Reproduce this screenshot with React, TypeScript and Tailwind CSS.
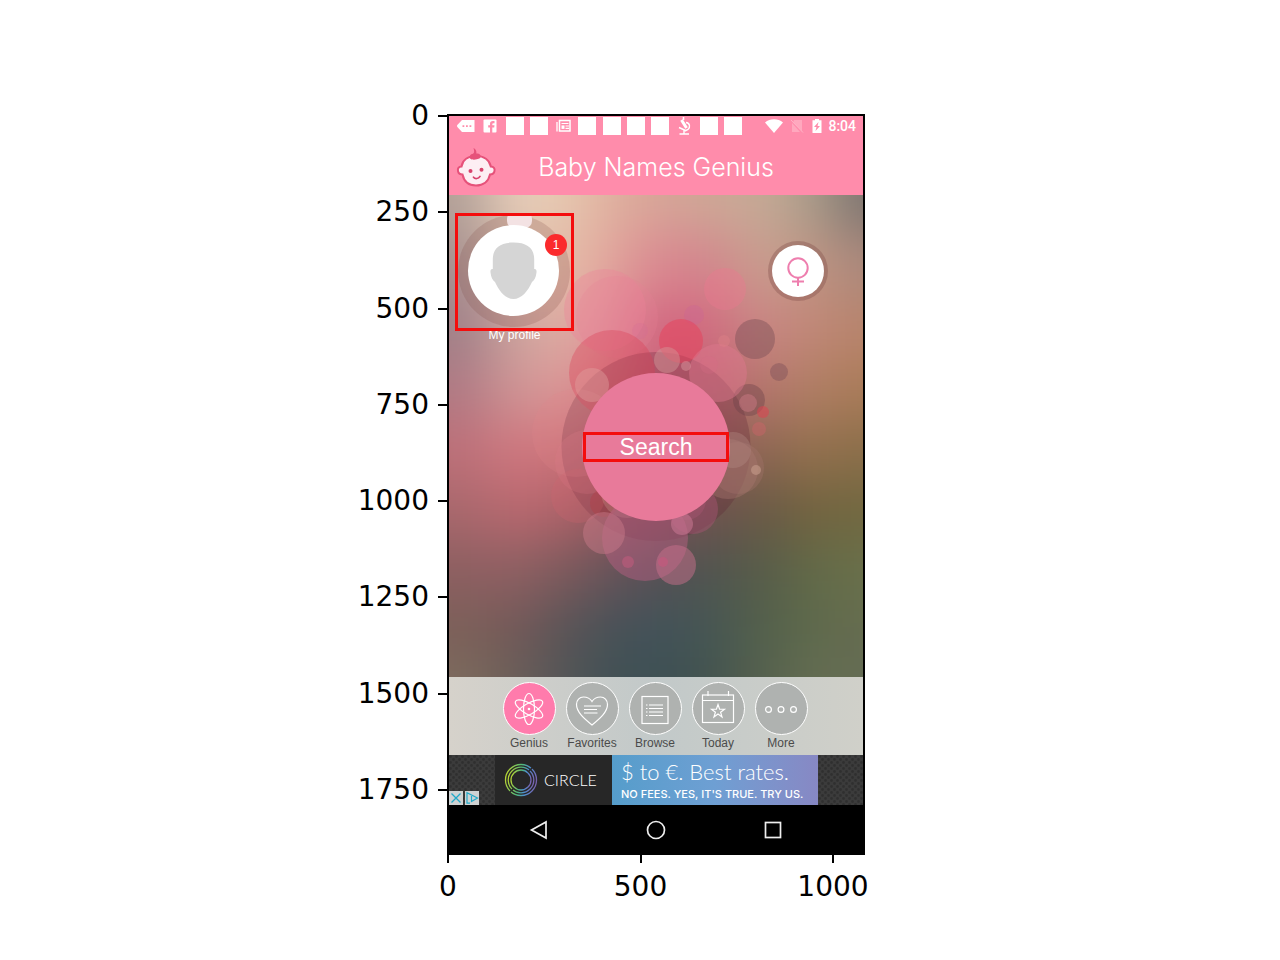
import type { ReactNode } from "react";

const yTicks = [0, 250, 500, 750, 1000, 1250, 1500, 1750];
const xTicks = [0, 500, 1000];

/* Backdrop colour mesh: column centres, then one row of colours per height. */
const meshX = [460, 515, 565, 610, 655, 705, 760, 815, 860];
const meshRows: [number, string[]][] = [
  [200, ["#b3a198", "#e6cdb9", "#e6c8b0", "#e0b09f", "#d8a498", "#cfa696", "#c6aa96", "#aa9c8a", "#7d7470"]],
  [265, ["#a68f8f", "#d8b8aa", "#e6bda8", "#e0a49c", "#db8890", "#d3858d", "#c99c8e", "#c09483", "#ab897c"]],
  [330, ["#a08088", "#cba39e", "#e0aea4", "#dd9298", "#d26580", "#d26a80", "#c98583", "#c18878", "#b8846c"]],
  [390, ["#b07a84", "#cf9495", "#dc9696", "#d27f85", "#c86075", "#bd6370", "#b4756d", "#b07e64", "#a97b58"]],
  [450, ["#bd7079", "#cf7880", "#cf747b", "#c0646f", "#ab5a65", "#955a5c", "#8e6754", "#94714e", "#8b6e4a"]],
  [510, ["#a9686d", "#b9686f", "#b0636a", "#9a5a60", "#82525a", "#70524f", "#6a5a47", "#73633f", "#726840"]],
  [570, ["#8d5f61", "#8f6063", "#7e5a5c", "#68535a", "#565155", "#505450", "#575c49", "#626a48", "#69704a"]],
  [630, ["#7c6059", "#735958", "#5a5457", "#485257", "#42525a", "#455654", "#53604c", "#5e6a4c", "#666c50"]],
  [685, ["#7d6c5e", "#6b5f59", "#525557", "#415154", "#3d4f54", "#42524f", "#55604e", "#656e52", "#646b54"]],
];

type Bubble = [number, number, number, string, number];
const bubbles: Bubble[] = [
  [605, 310, 41, "#ee8098", 0.34],
  [617, 317, 41, "#e88098", 0.22],
  [640, 331, 8, "#d26a9c", 0.2],
  [612, 373, 43, "#dc4055", 0.36],
  [725, 289, 21, "#ee7890", 0.36],
  [694, 315, 10, "#c860a0", 0.24],
  [681, 341, 22, "#e8405a", 0.5],
  [755, 339, 20, "#7d5058", 0.46],
  [779, 372, 9, "#7d5058", 0.44],
  [749, 400, 16, "#6b4048", 0.4],
  [576, 433, 44, "#e0888a", 0.2],
  [587, 462, 32, "#dc7c8c", 0.24],
  [578, 496, 27, "#cf6670", 0.26],
  [604, 503, 14, "#c03038", 0.24],
  [718, 373, 29, "#e07890", 0.44],
  [709, 365, 9, "#d86c88", 0.26],
  [748, 403, 9, "#d07c88", 0.46],
  [763, 412, 6, "#dc4450", 0.55],
  [724, 341, 6, "#de8088", 0.45],
  [759, 429, 7, "#cc6468", 0.45],
  [592, 385, 17, "#dfa09c", 0.44],
  [667, 360, 13, "#d29a98", 0.45],
  [686, 366, 5, "#d8929a", 0.5],
  [627, 492, 26, "#c08880", 0.4],
  [645, 538, 43, "#b86084", 0.48],
  [604, 533, 21, "#cc7c8c", 0.45],
  [676, 565, 20, "#c8708c", 0.5],
  [628, 562, 6, "#cf5a80", 0.45],
  [663, 562, 5, "#d85080", 0.4],
  [693, 509, 25, "#a85474", 0.45],
  [686, 500, 20, "#b4587a", 0.3],
  [682, 524, 11, "#cf7c98", 0.5],
  [728, 469, 30, "#ac7870", 0.38],
  [738, 468, 26, "#a87870", 0.3],
  [733, 450, 18, "#b48c84", 0.38],
  [756, 470, 5, "#bf9484", 0.7],
];

function Backdrop() {
  return (
    <svg
      className="absolute inset-0 h-full w-full"
      viewBox="449 195 414 482"
      preserveAspectRatio="none"
      aria-hidden="true"
    >
      <defs>
        <filter
          id="soften"
          filterUnits="userSpaceOnUse"
          x="300"
          y="50"
          width="720"
          height="780"
          colorInterpolationFilters="sRGB"
        >
          <feGaussianBlur stdDeviation="25" />
        </filter>
      </defs>
      <g filter="url(#soften)">
        {meshRows.map(([y, colours], r) => {
          const top = r === 0 ? 60 : (meshRows[r - 1][0] + y) / 2;
          const bottom = r === meshRows.length - 1 ? 820 : (meshRows[r + 1][0] + y) / 2;
          return colours.map((c, i) => {
            const left = i === 0 ? 310 : (meshX[i - 1] + meshX[i]) / 2;
            const right = i === meshX.length - 1 ? 1010 : (meshX[i + 1] + meshX[i]) / 2;
            return (
              <rect key={`${r}-${i}`} x={left} y={top} width={right - left + 1} height={bottom - top + 1} fill={c} />
            );
          });
        })}
      </g>
      <circle cx="656" cy="446.5" r="94.5" fill="#5a1e32" opacity="0.26" />
      {bubbles.map(([cx, cy, r, fill, opacity], i) => (
        <circle key={i} cx={cx} cy={cy} r={r} fill={fill} opacity={opacity} />
      ))}
    </svg>
  );
}

function Cell({ children }: { children?: ReactNode }) {
  return (
    <span className="flex flex-1 justify-center">
      {children ?? <span className="h-[18px] w-[18px] bg-white" />}
    </span>
  );
}

function StatusBar() {
  return (
    <div className="flex h-[20px] items-center justify-between pr-[7px] pl-[5px]">
      <div className="flex w-[291px] items-center">
        <Cell>
          <svg width="18" height="14" viewBox="0 0 18 14">
            <path d="M5 1h12.500v12H5L.8 8.500a2 2 0 0 1 0-3z" fill="#fff" />
            <path d="M5.500 6.200h1.800v1.800H5.500zM9 6.200h1.800v1.800H9zM12.500 6.200h1.800v1.800h-1.800z" fill="#ff8cab" />
          </svg>
        </Cell>
        <Cell>
          <svg width="14" height="14" viewBox="0 0 14 14">
            <rect x="0.500" y="0.500" width="13" height="13" rx="1" fill="#fff" />
            <path d="M7 14V8.500H5.200V6.300H7V4.800C7 3 8 2 9.800 2h1.700v2.200h-1.200c-.7 0-1 .3-1 .9v1.200h2.200l-.3 2.200H9.300V14z" fill="#ff8cab" />
          </svg>
        </Cell>
        <Cell />
        <Cell />
        <Cell>
          <svg width="15" height="14" viewBox="0 0 15 14" fill="none" stroke="#fff">
            <path d="M1 3v9.500" strokeWidth="1.300" />
            <rect x="3.500" y="1.500" width="10.500" height="10.500" strokeWidth="1.500" />
            <path d="M5.500 4.500h7M9.500 7H13M9.500 9.300H13" strokeWidth="1.200" />
            <path d="M5.500 6.400h3v3.500h-3z" fill="#fff" stroke="none" />
          </svg>
        </Cell>
        <Cell />
        <Cell />
        <Cell />
        <Cell />
        <Cell>
          <svg width="13" height="18" viewBox="0 0 13 18" fill="none" stroke="#fff" strokeWidth="1.400">
            <path d="M5.500 0v3" strokeWidth="1.600" />
            <path d="M3.500 3l5 8" strokeWidth="3" />
            <path d="M1 10.500l6.500 3M8 5.500c4 .5 4.500 5 2 7L7 14M1.500 17h9.500M6 13.500V17" />
          </svg>
        </Cell>
        <Cell />
        <Cell />
      </div>
      <div className="flex items-center">
        <svg className="mr-[7px]" width="18" height="14" viewBox="0 0 18 14">
          <path d="M0 3.400C5-.8 13-.8 18 3.400L9 14z" fill="#fff" />
        </svg>
        <svg className="mr-[8px]" width="14" height="14" viewBox="0 0 14 14">
          <path d="M4 1h8v11L3 3.500zM2 4l8 9H2z" fill="#ffb3c6" opacity="0.700" />
          <path d="M1 1l12 12.500" stroke="#ffb3c6" strokeWidth="1" />
        </svg>
        <svg className="mr-[6px]" width="10" height="14" viewBox="0 0 10 14">
          <path d="M3 0h4v1.300h2.500V14h-9V1.300H3z" fill="#fff" />
          <path d="M6.500 3L2 8h2.500L3.500 12 8 7H5.500z" fill="#ff8cab" />
        </svg>
        <span className="font-[Roboto,sans-serif] text-[14px] leading-4 font-medium">8:04</span>
      </div>
    </div>
  );
}

function BabyIcon() {
  return (
    <svg width="40" height="42" viewBox="0 0 40 42" fill="none">
      <path
        d="M20 9C12 9 6.500 13 5.500 19.500 2.500 19.500 1.500 21.500 2 24c.4 2.300 2 3.500 4.500 3.500C8 34.500 13 38.500 20 38.500s12.500-4 14-11c2.300 0 4-1.200 4.500-3.500.5-2.500-.7-4.500-3.700-4.500C33.500 13 28 9 20 9z"
        fill="#fdeef3"
        stroke="#e6527a"
        strokeWidth="2"
      />
      <path d="M14 11.500c-1-2.500.5-4.300 3-4.800 1.300-.4 1.500-2.500.5-5.700 2.500 1.200 3.300 3.400 2.800 5.600 2.500-.5 4 .6 4.300 2.200.4 2-1.100 3.200-3.800 3.500-2.500.6-5.300.5-6.800-.8z" fill="#e6527a" />
      <circle cx="14.500" cy="24" r="2" fill="#d8426c" />
      <circle cx="25.500" cy="22.800" r="2" fill="#d8426c" />
      <path d="M17.500 30.200c1.500 2 5 1.800 6.500-.8" stroke="#d8426c" strokeWidth="1.700" strokeLinecap="round" />
    </svg>
  );
}

const line = { fill: "none", stroke: "#fff", strokeWidth: 1.2 } as const;

const tabs: { label: string; active?: boolean; icon: ReactNode }[] = [
  {
    label: "Genius",
    active: true,
    icon: (
      <g {...line}>
        <ellipse cx="18" cy="18" rx="5.500" ry="15.500" />
        <ellipse cx="18" cy="18" rx="5.500" ry="15.500" transform="rotate(60 18 18)" />
        <ellipse cx="18" cy="18" rx="5.500" ry="15.500" transform="rotate(120 18 18)" />
        <circle cx="18" cy="18" r="1.300" fill="#fff" stroke="none" />
      </g>
    ),
  },
  {
    label: "Favorites",
    icon: (
      <g {...line}>
        <path d="M18 34C10 27.500 2.500 21 2.500 13.500 2.500 9 5.500 6 9.500 6c3.700 0 6.800 1.800 8.500 4.500C19.700 7.800 22.800 6 26.500 6c4 0 7 3 7 7.500C33.500 21 26 27.500 18 34z" />
        <path d="M10 15h17M10 18.500h13M10 22h13.500" />
      </g>
    ),
  },
  {
    label: "Browse",
    icon: (
      <g {...line}>
        <rect x="5" y="5.500" width="26" height="27" />
        <path d="M12 14h14M12 17.500h14M12 21h14M12 24.500h14M9 14h1.500M9 17.500h1.500M9 21h1.500M9 24.500h1.500" />
      </g>
    ),
  },
  {
    label: "Today",
    icon: (
      <g {...line}>
        <rect x="2.500" y="4" width="31" height="27.500" />
        <path d="M2.500 9.500h31M8 0v5M28.500 0v5" />
        <path d="M18 13.500l1.600 4.600 4.900.1-3.900 3 1.400 4.700-4-2.800-4 2.800 1.400-4.700-3.900-3 4.900-.1z" />
      </g>
    ),
  },
  {
    label: "More",
    icon: (
      <g {...line}>
        <circle cx="5.500" cy="18.500" r="2.900" />
        <circle cx="18" cy="18.500" r="2.900" />
        <circle cx="30.500" cy="18.500" r="2.900" />
      </g>
    ),
  },
];

function HexPattern({ id }: { id: string }) {
  return (
    <svg className="h-full w-full" aria-hidden="true">
      <defs>
        <pattern id={id} width="6" height="6" patternUnits="userSpaceOnUse">
          <rect width="6" height="6" fill="#3b3b3b" />
          <circle cx="1.500" cy="1.500" r="1.400" fill="#2f2f2f" />
          <circle cx="4.500" cy="4.500" r="1.400" fill="#2f2f2f" />
        </pattern>
      </defs>
      <rect width="100%" height="100%" fill={`url(#${id})`} />
    </svg>
  );
}

function AdBanner() {
  return (
    <aside className="relative flex h-[50px] bg-[#272727] text-white">
      <div className="w-[46px]">
        <HexPattern id="hexLeft" />
      </div>
      <div className="flex flex-1 items-center gap-[6px] pl-[9px]">
        <svg width="34" height="34" viewBox="0 0 34 34" fill="none" strokeWidth="1.300">
          <defs>
            <linearGradient id="ring" x1="0" y1="0.400" x2="1" y2="0.600">
              <stop offset="0" stopColor="#b5d334" />
              <stop offset="0.450" stopColor="#4fb77c" />
              <stop offset="0.700" stopColor="#4d8fd0" />
              <stop offset="1" stopColor="#7a62b0" />
            </linearGradient>
          </defs>
          <circle cx="17" cy="17" r="15.500" stroke="url(#ring)" />
          <circle cx="17" cy="17" r="12.800" stroke="url(#ring)" />
          <circle cx="17" cy="17" r="10" stroke="url(#ring)" />
          <path d="M24 9l5-5M5 30l5-5" stroke="#272727" strokeWidth="1.500" />
        </svg>
        <span className="font-[Lato,sans-serif] text-[16px] leading-5 font-light">CIRCLE</span>
      </div>
      <div className="flex w-[206px] flex-col bg-linear-to-r from-[#559dcb] via-[#6e9fd3] to-[#8788c4] pl-[9px]">
        <span className="pt-[4px] font-[Lato,sans-serif] text-[22px] leading-[26px] font-light whitespace-nowrap">
          $ to €. Best rates.
        </span>
        <span className="pt-[3px] font-[Inter,sans-serif] text-[11px] leading-3 font-medium whitespace-nowrap">
          NO FEES. YES, IT'S TRUE. TRY US.
        </span>
      </div>
      <div className="w-[45px]">
        <HexPattern id="hexRight" />
      </div>
      <div className="absolute bottom-0 left-0 flex gap-[2px]">
        <button aria-label="Close ad" className="h-[14px] w-[14px] bg-[#cfd2d3]">
          <svg width="14" height="14" viewBox="0 0 14 14">
            <path d="M2.500 2.500l9 9M11.500 2.500l-9 9" stroke="#1fa9c9" strokeWidth="1.300" />
          </svg>
        </button>
        <button aria-label="Ad choices" className="h-[14px] w-[14px] bg-[#cfd2d3]">
          <svg width="14" height="14" viewBox="0 0 14 14" fill="none" stroke="#1fa9c9" strokeWidth="1.200">
            <path d="M5 12.200H2V1.800l10.500 5.200L6.500 10.500V5" />
          </svg>
        </button>
      </div>
    </aside>
  );
}

function Phone() {
  return (
    <div className="flex flex-col border-2 border-black font-['Liberation_Sans',Arial,sans-serif] text-white">
      <header className="bg-[#ff8cab]">
        <StatusBar />
        <div className="grid h-[59px] grid-cols-[1fr_auto_1fr] items-start">
          <span className="pt-[11px] pl-[7px]">
            <BabyIcon />
          </span>
          <h1 className="pt-[15px] font-[Inter,sans-serif] text-[25px] leading-8 font-light whitespace-nowrap">
            Baby Names Genius
          </h1>
        </div>
      </header>

      <main className="relative flex h-[482px] flex-col">
        <Backdrop />
        <div className="relative flex items-start justify-between pt-[18px] pr-[35px] pl-[6px]">
          <div className="flex flex-col items-center">
            <button aria-label="My profile" className="relative z-10 border-[3px] border-[#f40d0d]">
              <svg width="113" height="112" viewBox="0 0 113 112">
                <circle cx="56" cy="55" r="56" fill="#7d4640" opacity="0.2" />
                <rect x="49" y="-4" width="25" height="16" rx="7" fill="#f3e2e3" />
                <circle cx="55.500" cy="54.500" r="45.500" fill="#fff" />
                <path
                  d="M55.500 26.500C42 26.500 35 32 34.800 43v10c-2-.5-2.700 1.500-2.200 4 .5 4 2 7.500 4.400 9 4 9 10.500 17 18.500 17S70 75 74 66c2.400-1.500 3.900-5 4.400-9 .5-2.500-.2-4.500-2.200-4V43C76 32 69 26.500 55.500 26.500z"
                  fill="#d5d5d5"
                />
              </svg>
              <span className="absolute top-[18px] right-[4px] flex h-[22px] w-[22px] items-center justify-center rounded-full bg-[#fb2a2c] text-[12px] leading-none">
                1
              </span>
            </button>
            <span className="-mt-[2px] text-[12px] leading-3">My profile</span>
          </div>
          <button
            aria-label="Female"
            className="mt-[28px] flex h-[60px] w-[60px] items-center justify-center rounded-full bg-[#7d4a48]/35"
          >
            <span className="flex h-[52px] w-[52px] items-center justify-center rounded-full bg-white">
              <svg width="24" height="32" viewBox="0 0 24 32" fill="none" stroke="#ee7eae" strokeWidth="2">
                <circle cx="12" cy="13" r="9.700" />
                <path d="M12 23v8M6 26.500h12" />
              </svg>
            </span>
          </button>
        </div>
        <button className="relative mt-[32px] flex h-[148px] w-[148px] items-center justify-center self-center rounded-full bg-[#e87a9a]">
          <span className="flex h-[30px] w-[146px] items-center justify-center border-[3px] border-[#f40d0d] text-[23px] leading-6">
            Search
          </span>
        </button>
      </main>

      <nav className="flex h-[78px] justify-center bg-linear-to-r from-[#d6d2cb] via-[#c2c9c9] to-[#d0d0c9] pt-[5px] pr-[2px]">
        {tabs.map(({ label, active, icon }) => (
          <button key={label} className="flex w-[63px] flex-col items-center gap-px text-[12px] leading-[14px] text-[#4b4b4b]">
            <span
              className={
                active
                  ? "flex h-[53px] w-[53px] items-center justify-center rounded-full border border-white bg-[#ff7bac]"
                  : "flex h-[53px] w-[53px] items-center justify-center rounded-full border border-white bg-[#afb2b0]"
              }
            >
              <svg width="36" height="36" viewBox="0 0 36 36">
                {icon}
              </svg>
            </span>
            {label}
          </button>
        ))}
      </nav>

      <AdBanner />

      <div className="flex h-[48px] items-center justify-center bg-black pt-px">
        <button aria-label="Back" className="flex w-[117px] justify-center">
          <svg width="20" height="20" viewBox="0 0 20 20" fill="none" stroke="#eee" strokeWidth="1.700">
            <path d="M2.500 10L17 2v16z" />
          </svg>
        </button>
        <button aria-label="Home" className="flex w-[117px] justify-center">
          <svg width="20" height="20" viewBox="0 0 20 20" fill="none" stroke="#eee" strokeWidth="1.700">
            <circle cx="10" cy="10" r="8.500" />
          </svg>
        </button>
        <button aria-label="Recents" className="flex w-[117px] justify-center">
          <svg width="20" height="20" viewBox="0 0 20 20" fill="none" stroke="#eee" strokeWidth="1.700">
            <rect x="2.500" y="2.500" width="15" height="15" />
          </svg>
        </button>
      </div>
    </div>
  );
}

export default function App() {
  return (
    <div className="min-h-screen bg-white pt-[100px] pl-8 font-['DejaVu_Sans',sans-serif] text-[28px] leading-8 text-black">
      <div className="grid grid-cols-[1fr_418px_1fr]">
        <div className="flex h-[706px] flex-col justify-between">
          {yTicks.map((t) => (
            <div key={t} className="flex h-8 items-center justify-end gap-[9px]">
              <span>{t}</span>
              <span className="h-[2px] w-[9px] bg-black" />
            </div>
          ))}
        </div>
        <div className="pt-[14px]">
          <Phone />
          <div className="-ml-[39px] flex w-[465px] justify-between">
            {xTicks.map((t) => (
              <div key={t} className="flex w-20 flex-col items-center gap-2">
                <span className="h-[8px] w-[2px] bg-black" />
                <span>{t}</span>
              </div>
            ))}
          </div>
        </div>
      </div>
    </div>
  );
}
